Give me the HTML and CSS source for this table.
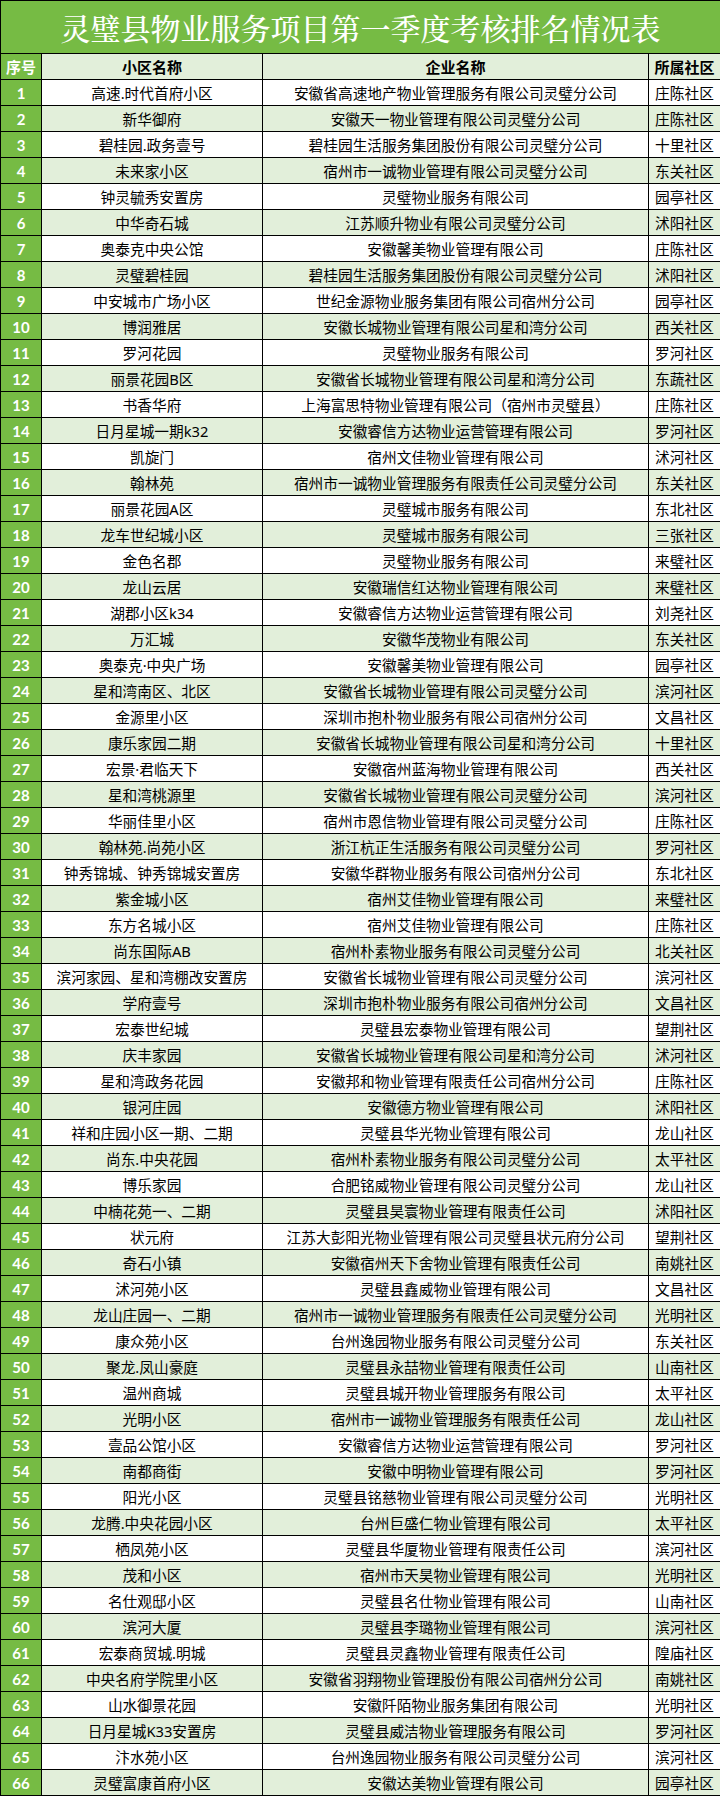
FILE: index.html
```html
<!DOCTYPE html>
<html lang="zh-CN">
<head>
<meta charset="utf-8">
<title>灵璧县物业服务项目第一季度考核排名情况表</title>
<link rel="stylesheet" href="styles.css">
</head>
<body>
<table class="sheet">
<colgroup><col class="c-no"><col class="c-name"><col class="c-corp"><col class="c-area"></colgroup>
<thead>
<tr class="title-row"><th colspan="4" class="title">灵璧县物业服务项目第一季度考核排名情况表</th></tr>
<tr class="head-row"><th class="no">序号</th><th>小区名称</th><th>企业名称</th><th>所属社区</th></tr>
</thead>
<tbody>
<tr><td class="no">1</td><td>高速.时代首府小区</td><td>安徽省高速地产物业管理服务有限公司灵璧分公司</td><td>庄陈社区</td></tr>
<tr><td class="no">2</td><td>新华御府</td><td>安徽天一物业管理有限公司灵璧分公司</td><td>庄陈社区</td></tr>
<tr><td class="no">3</td><td>碧桂园.政务壹号</td><td>碧桂园生活服务集团股份有限公司灵璧分公司</td><td>十里社区</td></tr>
<tr><td class="no">4</td><td>未来家小区</td><td>宿州市一诚物业管理有限公司灵璧分公司</td><td>东关社区</td></tr>
<tr><td class="no">5</td><td>钟灵毓秀安置房</td><td>灵璧物业服务有限公司</td><td>园亭社区</td></tr>
<tr><td class="no">6</td><td>中华奇石城</td><td>江苏顺升物业有限公司灵璧分公司</td><td>沭阳社区</td></tr>
<tr><td class="no">7</td><td>奥泰克中央公馆</td><td>安徽馨美物业管理有限公司</td><td>庄陈社区</td></tr>
<tr><td class="no">8</td><td>灵璧碧桂园</td><td>碧桂园生活服务集团股份有限公司灵璧分公司</td><td>沭阳社区</td></tr>
<tr><td class="no">9</td><td>中安城市广场小区</td><td>世纪金源物业服务集团有限公司宿州分公司</td><td>园亭社区</td></tr>
<tr><td class="no">10</td><td>博润雅居</td><td>安徽长城物业管理有限公司星和湾分公司</td><td>西关社区</td></tr>
<tr><td class="no">11</td><td>罗河花园</td><td>灵璧物业服务有限公司</td><td>罗河社区</td></tr>
<tr><td class="no">12</td><td>丽景花园B区</td><td>安徽省长城物业管理有限公司星和湾分公司</td><td>东蔬社区</td></tr>
<tr><td class="no">13</td><td>书香华府</td><td>上海富思特物业管理有限公司（宿州市灵璧县）</td><td>庄陈社区</td></tr>
<tr><td class="no">14</td><td>日月星城一期k32</td><td>安徽睿信方达物业运营管理有限公司</td><td>罗河社区</td></tr>
<tr><td class="no">15</td><td>凯旋门</td><td>宿州文佳物业管理有限公司</td><td>沭河社区</td></tr>
<tr><td class="no">16</td><td>翰林苑</td><td>宿州市一诚物业管理服务有限责任公司灵璧分公司</td><td>东关社区</td></tr>
<tr><td class="no">17</td><td>丽景花园A区</td><td>灵璧城市服务有限公司</td><td>东北社区</td></tr>
<tr><td class="no">18</td><td>龙车世纪城小区</td><td>灵璧城市服务有限公司</td><td>三张社区</td></tr>
<tr><td class="no">19</td><td>金色名郡</td><td>灵璧物业服务有限公司</td><td>来璧社区</td></tr>
<tr><td class="no">20</td><td>龙山云居</td><td>安徽瑞信红达物业管理有限公司</td><td>来璧社区</td></tr>
<tr><td class="no">21</td><td>湖郡小区k34</td><td>安徽睿信方达物业运营管理有限公司</td><td>刘尧社区</td></tr>
<tr><td class="no">22</td><td>万汇城</td><td>安徽华茂物业有限公司</td><td>东关社区</td></tr>
<tr><td class="no">23</td><td>奥泰克·中央广场</td><td>安徽馨美物业管理有限公司</td><td>园亭社区</td></tr>
<tr><td class="no">24</td><td>星和湾南区、北区</td><td>安徽省长城物业管理有限公司灵璧分公司</td><td>滨河社区</td></tr>
<tr><td class="no">25</td><td>金源里小区</td><td>深圳市抱朴物业服务有限公司宿州分公司</td><td>文昌社区</td></tr>
<tr><td class="no">26</td><td>康乐家园二期</td><td>安徽省长城物业管理有限公司星和湾分公司</td><td>十里社区</td></tr>
<tr><td class="no">27</td><td>宏景·君临天下</td><td>安徽宿州蓝海物业管理有限公司</td><td>西关社区</td></tr>
<tr><td class="no">28</td><td>星和湾桃源里</td><td>安徽省长城物业管理有限公司灵璧分公司</td><td>滨河社区</td></tr>
<tr><td class="no">29</td><td>华丽佳里小区</td><td>宿州市恩信物业管理有限公司灵璧分公司</td><td>庄陈社区</td></tr>
<tr><td class="no">30</td><td>翰林苑.尚苑小区</td><td>浙江杭正生活服务有限公司灵璧分公司</td><td>罗河社区</td></tr>
<tr><td class="no">31</td><td>钟秀锦城、钟秀锦城安置房</td><td>安徽华群物业服务有限公司宿州分公司</td><td>东北社区</td></tr>
<tr><td class="no">32</td><td>紫金城小区</td><td>宿州艾佳物业管理有限公司</td><td>来璧社区</td></tr>
<tr><td class="no">33</td><td>东方名城小区</td><td>宿州艾佳物业管理有限公司</td><td>庄陈社区</td></tr>
<tr><td class="no">34</td><td>尚东国际AB</td><td>宿州朴素物业服务有限公司灵璧分公司</td><td>北关社区</td></tr>
<tr><td class="no">35</td><td>滨河家园、星和湾棚改安置房</td><td>安徽省长城物业管理有限公司灵璧分公司</td><td>滨河社区</td></tr>
<tr><td class="no">36</td><td>学府壹号</td><td>深圳市抱朴物业服务有限公司宿州分公司</td><td>文昌社区</td></tr>
<tr><td class="no">37</td><td>宏泰世纪城</td><td>灵璧县宏泰物业管理有限公司</td><td>望荆社区</td></tr>
<tr><td class="no">38</td><td>庆丰家园</td><td>安徽省长城物业管理有限公司星和湾分公司</td><td>沭河社区</td></tr>
<tr><td class="no">39</td><td>星和湾政务花园</td><td>安徽邦和物业管理有限责任公司宿州分公司</td><td>庄陈社区</td></tr>
<tr><td class="no">40</td><td>银河庄园</td><td>安徽德方物业管理有限公司</td><td>沭阳社区</td></tr>
<tr><td class="no">41</td><td>祥和庄园小区一期、二期</td><td>灵璧县华光物业管理有限公司</td><td>龙山社区</td></tr>
<tr><td class="no">42</td><td>尚东.中央花园</td><td>宿州朴素物业服务有限公司灵璧分公司</td><td>太平社区</td></tr>
<tr><td class="no">43</td><td>博乐家园</td><td>合肥铭威物业管理有限公司灵璧分公司</td><td>龙山社区</td></tr>
<tr><td class="no">44</td><td>中楠花苑一、二期</td><td>灵璧县昊寰物业管理有限责任公司</td><td>沭阳社区</td></tr>
<tr><td class="no">45</td><td>状元府</td><td>江苏大彭阳光物业管理有限公司灵璧县状元府分公司</td><td>望荆社区</td></tr>
<tr><td class="no">46</td><td>奇石小镇</td><td>安徽宿州天下舍物业管理有限责任公司</td><td>南姚社区</td></tr>
<tr><td class="no">47</td><td>沭河苑小区</td><td>灵璧县鑫威物业管理有限公司</td><td>文昌社区</td></tr>
<tr><td class="no">48</td><td>龙山庄园一、二期</td><td>宿州市一诚物业管理服务有限责任公司灵璧分公司</td><td>光明社区</td></tr>
<tr><td class="no">49</td><td>康众苑小区</td><td>台州逸园物业服务有限公司灵璧分公司</td><td>东关社区</td></tr>
<tr><td class="no">50</td><td>聚龙.凤山豪庭</td><td>灵璧县永喆物业管理有限责任公司</td><td>山南社区</td></tr>
<tr><td class="no">51</td><td>温州商城</td><td>灵璧县城开物业管理服务有限公司</td><td>太平社区</td></tr>
<tr><td class="no">52</td><td>光明小区</td><td>宿州市一诚物业管理服务有限责任公司</td><td>龙山社区</td></tr>
<tr><td class="no">53</td><td>壹品公馆小区</td><td>安徽睿信方达物业运营管理有限公司</td><td>罗河社区</td></tr>
<tr><td class="no">54</td><td>南都商街</td><td>安徽中明物业管理有限公司</td><td>罗河社区</td></tr>
<tr><td class="no">55</td><td>阳光小区</td><td>灵璧县铭慈物业管理有限公司灵璧分公司</td><td>光明社区</td></tr>
<tr><td class="no">56</td><td>龙腾.中央花园小区</td><td>台州巨盛仁物业管理有限公司</td><td>太平社区</td></tr>
<tr><td class="no">57</td><td>栖凤苑小区</td><td>灵璧县华厦物业管理有限责任公司</td><td>滨河社区</td></tr>
<tr><td class="no">58</td><td>茂和小区</td><td>宿州市天昊物业管理有限公司</td><td>光明社区</td></tr>
<tr><td class="no">59</td><td>名仕观邸小区</td><td>灵璧县名仕物业管理有限公司</td><td>山南社区</td></tr>
<tr><td class="no">60</td><td>滨河大厦</td><td>灵璧县李璐物业管理有限公司</td><td>滨河社区</td></tr>
<tr><td class="no">61</td><td>宏泰商贸城.明城</td><td>灵璧县灵鑫物业管理有限责任公司</td><td>隍庙社区</td></tr>
<tr><td class="no">62</td><td>中央名府学院里小区</td><td>安徽省羽翔物业管理股份有限公司宿州分公司</td><td>南姚社区</td></tr>
<tr><td class="no">63</td><td>山水御景花园</td><td>安徽阡陌物业服务集团有限公司</td><td>光明社区</td></tr>
<tr><td class="no">64</td><td>日月星城K33安置房</td><td>灵璧县威洁物业管理服务有限公司</td><td>罗河社区</td></tr>
<tr><td class="no">65</td><td>汴水苑小区</td><td>台州逸园物业服务有限公司灵璧分公司</td><td>滨河社区</td></tr>
<tr><td class="no">66</td><td>灵璧富康首府小区</td><td>安徽达美物业管理有限公司</td><td>园亭社区</td></tr>
</tbody>
</table>
</body>
</html>
```
FILE: styles.css
```css
html, body {
  margin: 0;
  padding: 0;
  background: #ffffff;
}

.sheet {
  width: 720px;
  border-collapse: collapse;
  table-layout: fixed;
  font-family: "Noto Sans", "Noto Sans CJK SC", sans-serif;
  font-size: 14.7px;
  color: #000;
}

.c-no { width: 41px; }
.c-name { width: 221px; }
.c-corp { width: 386px; }
.c-area { width: 72px; }

.sheet th,
.sheet td {
  border: 1px solid #000;
  padding: 0;
  text-align: center;
  vertical-align: middle;
  white-space: nowrap;
  overflow: hidden;
  line-height: 20px;
}

.title-row { height: 53px; }

.title {
  background: #76bb44;
  color: #ffffff;
  font-family: "Noto Serif CJK SC", "Noto Sans CJK SC", serif;
  font-size: 30px;
  font-weight: 500;
  line-height: 40px;
  padding-left: 12px;
}

.head-row { height: 26px; }

.head-row th {
  background: #e2efda;
  font-weight: 700;
  font-size: 15px;
}

.sheet tbody tr { height: 26px; }

.sheet tbody tr:nth-child(even) td { background: #e2efda; }

.sheet .no,
.sheet tbody tr:nth-child(even) td.no,
.head-row th.no {
  background: #76bb44;
  color: #ffffff;
  font-weight: 700;
}

.sheet td.no {
  font-family: Lato, "Open Sans", sans-serif;
  font-size: 15px;
}
```
